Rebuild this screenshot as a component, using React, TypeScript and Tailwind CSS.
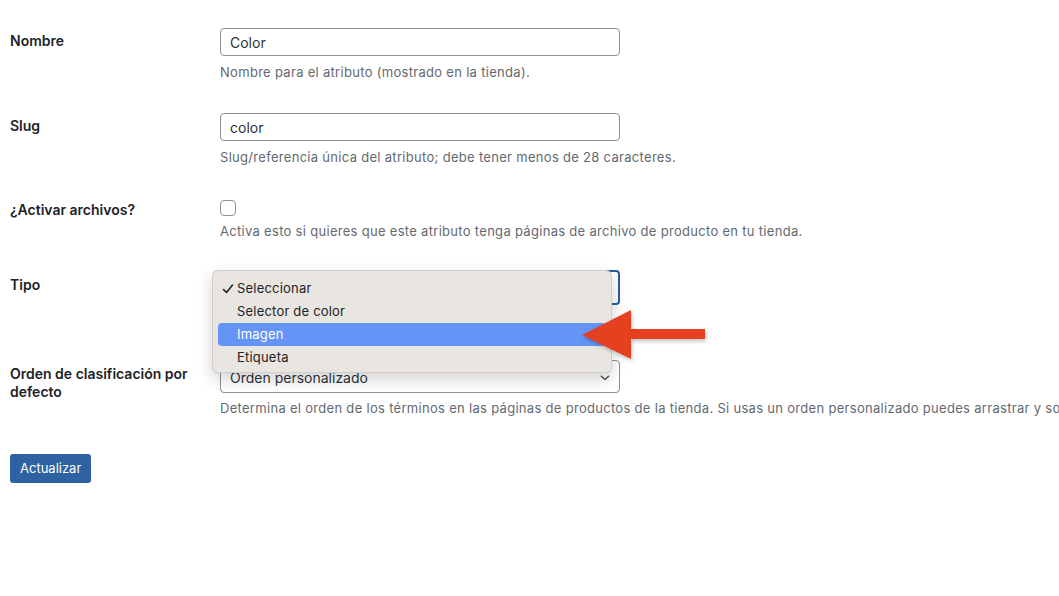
import React from 'react';

const fontStack = "font-['Inter','Noto_Sans','Liberation_Sans',sans-serif]";

const menuItems = ['Seleccionar', 'Selector de color', 'Imagen', 'Etiqueta'];

function Check() {
  return (
    <svg viewBox="0 0 12 12" className="absolute left-[4px] top-[6px] h-[12px] w-[12px]" fill="none">
      <path d="M1.5 6.5 L4.5 9.5 L10.5 2" stroke="#222" strokeWidth="1.6" strokeLinecap="round" strokeLinejoin="round" />
    </svg>
  );
}

function Chevron() {
  return (
    <svg viewBox="0 0 12 8" className="h-[6px] w-[10px]" fill="none">
      <path d="M1 1.5 L6 6 L11 1.5" stroke="#50575e" strokeWidth="1.8" strokeLinecap="round" strokeLinejoin="round" />
    </svg>
  );
}

export default function App() {
  return (
    <div className={`relative h-[596px] w-full overflow-hidden bg-white pl-[10px] pt-[28px] text-[14px] text-[#1d2327] ${fontStack}`}>
      {/* Nombre */}
      <div className="flex">
        <div className="w-[210px] shrink-0 pt-[4px] font-semibold leading-[18px]">Nombre</div>
        <div>
          <input
            readOnly
            value="Color"
            className="block h-[28px] w-[400px] rounded-[4px] border border-[#8c8f94] px-[9px] text-[14px] text-[#2c3338] outline-none"
          />
          <p className="mt-[6px] text-[13px] leading-5 tracking-[0.3px] text-[#646970]">
            Nombre para el atributo (mostrado en la tienda).
          </p>
        </div>
      </div>

      {/* Slug */}
      <div className="mt-[31px] flex">
        <div className="w-[210px] shrink-0 pt-[4px] font-semibold leading-[18px]">Slug</div>
        <div>
          <input
            readOnly
            value="color"
            className="block h-[28px] w-[400px] rounded-[4px] border border-[#8c8f94] px-[9px] text-[14px] text-[#2c3338] outline-none"
          />
          <p className="mt-[6px] text-[13px] leading-5 tracking-[0.3px] text-[#646970]">
            Slug/referencia única del atributo; debe tener menos de 28 caracteres.
          </p>
        </div>
      </div>

      {/* Activar archivos */}
      <div className="mt-[33px] flex">
        <div className="w-[210px] shrink-0 pt-[1px] font-semibold leading-[18px]">¿Activar archivos?</div>
        <div>
          <div className="h-[16px] w-[16px] rounded-[4px] border border-[#8c8f94] bg-white" />
          <p className="mt-[5px] text-[13px] leading-5 tracking-[0.3px] text-[#646970]">
            Activa esto si quieres que este atributo tenga páginas de archivo de producto en tu tienda.
          </p>
        </div>
      </div>

      {/* Tipo */}
      <div className="mt-[29px] flex">
        <div className="w-[210px] shrink-0 pt-[6px] font-semibold leading-[18px]">Tipo</div>
        <div className="relative">
          <div className="h-[35px] w-[400px] rounded-[4px] border-2 border-[#2c5c9c]" />
          <div className="absolute left-[-8px] top-0 z-10 w-[400px] rounded-[6px] border border-black/10 bg-[#e9e5e1] px-[5px] pb-[3px] pt-[6px] text-[13px] tracking-[0.2px] text-[#222] shadow-[0_6px_16px_rgba(0,0,0,0.18)]">
            {menuItems.map((item, i) => (
              <div
                key={item}
                className={`relative flex h-[23px] items-center rounded-[4px] pl-[19px] ${i === 2 ? 'bg-[#6494f6] text-white' : ''}`}
              >
                {i === 0 && <Check />}
                {item}
              </div>
            ))}
          </div>
        </div>
      </div>

      {/* Orden */}
      <div className="mt-[55px] flex">
        <div className="w-[210px] shrink-0 pr-[20px] pt-[5px] font-semibold leading-[18px]">
          Orden de clasificación por defecto
        </div>
        <div>
          <div className="flex h-[33px] w-[400px] items-center justify-between rounded-[4px] border border-[#8c8f94] pl-[9px] pr-[9px] pt-[2px] text-[14px] text-[#2c3338]">
            <span>Orden personalizado</span>
            <Chevron />
          </div>
          <p className="mt-[5px] whitespace-nowrap text-[13px] leading-5 tracking-[0.3px] text-[#646970]">
            Determina el orden de los términos en las páginas de productos de la tienda. Si usas un orden personalizado puedes arrastrar y soltar los términos en este atributo.
          </p>
        </div>
      </div>

      <button className="mt-[36px] h-[29px] rounded-[3px] bg-[#2f62a3] px-[10px] text-[13px] text-white">
        Actualizar
      </button>

      {/* annotation arrow */}
      <svg
        viewBox="0 0 136 60"
        className="pointer-events-none absolute left-[576px] top-[306px] z-20 h-[60px] w-[136px] drop-shadow-[1px_2px_2px_rgba(0,0,0,0.25)]"
      >
        <polygon points="6,29 55,4 55,23 129,23 129,33 55,33 55,53" fill="#e5401f" />
      </svg>
    </div>
  );
}
